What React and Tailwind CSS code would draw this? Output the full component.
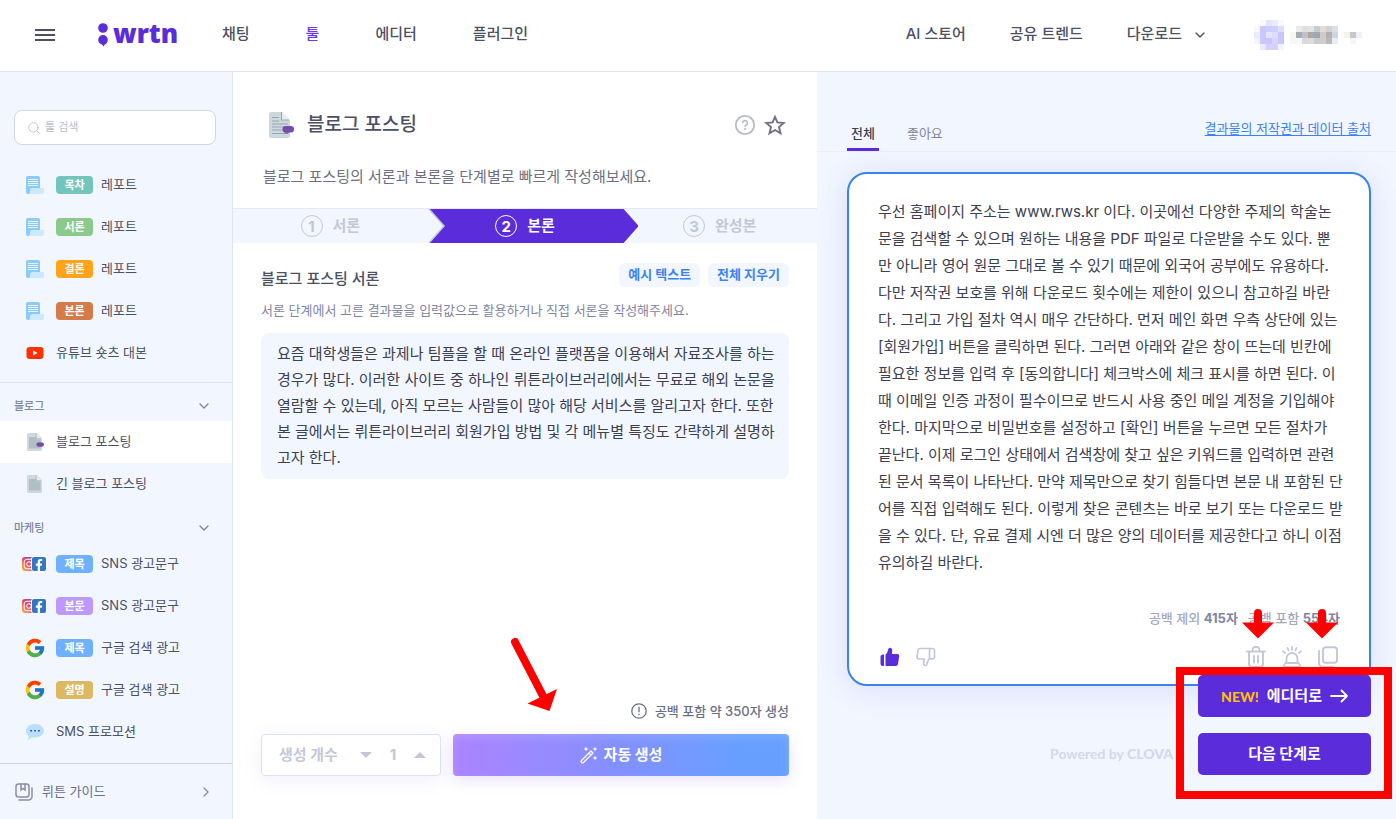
import React from "react";
import { Search, ChevronDown, ChevronRight } from "lucide-react";
import { FcGoogle } from "react-icons/fc";
import { FaInstagram, FaFacebookF } from "react-icons/fa";

const INTRO = `요즘 대학생들은 과제나 팀플을 할 때 온라인 플랫폼을 이용해서 자료조사를 하는 경우가 많다. 이러한 사이트 중 하나인 뤼튼라이브러리에서는 무료로 해외 논문을 열람할 수 있는데, 아직 모르는 사람들이 많아 해당 서비스를 알리고자 한다. 또한 본 글에서는 뤼튼라이브러리 회원가입 방법 및 각 메뉴별 특징도 간략하게 설명하고자 한다.`;

const RESULT = `우선 홈페이지 주소는 www.rws.kr 이다. 이곳에선 다양한 주제의 학술논
문을 검색할 수 있으며 원하는 내용을 PDF 파일로 다운받을 수도 있다. 뿐
만 아니라 영어 원문 그대로 볼 수 있기 때문에 외국어 공부에도 유용하다.
다만 저작권 보호를 위해 다운로드 횟수에는 제한이 있으니 참고하길 바란
다. 그리고 가입 절차 역시 매우 간단하다. 먼저 메인 화면 우측 상단에 있는
[회원가입] 버튼을 클릭하면 된다. 그러면 아래와 같은 창이 뜨는데 빈칸에
필요한 정보를 입력 후 [동의합니다] 체크박스에 체크 표시를 하면 된다. 이
때 이메일 인증 과정이 필수이므로 반드시 사용 중인 메일 계정을 기입해야
한다. 마지막으로 비밀번호를 설정하고 [확인] 버튼을 누르면 모든 절차가
끝난다. 이제 로그인 상태에서 검색창에 찾고 싶은 키워드를 입력하면 관련
된 문서 목록이 나타난다. 만약 제목만으로 찾기 힘들다면 본문 내 포함된 단
어를 직접 입력해도 된다. 이렇게 찾은 콘텐츠는 바로 보기 또는 다운로드 받
을 수 있다. 단, 유료 결제 시엔 더 많은 양의 데이터를 제공한다고 하니 이점
유의하길 바란다.`;

const AVATAR = [
  [1, 0, "#f8f8ff"], [2, 0, "#e4e4fe"], [3, 0, "#ebebff"], [4, 0, "#f8f8ff"],
  [0, 1, "#f8f8ff"], [1, 1, "#c8c8fe"], [2, 1, "#cfcfff"], [3, 1, "#cfcfff"], [4, 1, "#dedeff"],
  [0, 2, "#eaeafe"], [1, 2, "#c6c8ff"], [2, 2, "#e4e4fe"], [3, 2, "#dcdcff"], [4, 2, "#c6c6ff"],
  [0, 3, "#f4f4ff"], [1, 3, "#c8c8ff"], [2, 3, "#c6c6ff"], [3, 3, "#d4d4ff"], [4, 3, "#c8c8ff"],
  [1, 4, "#eaeaff"], [2, 4, "#d2d2ff"], [3, 4, "#d2d2ff"], [4, 4, "#f4f4ff"],
  [7, 1, "#eaeaea"], [8, 1, "#e0e0e4"], [9, 1, "#e6e2e0"], [10, 1, "#c6ccd6"], [11, 1, "#e2dcda"], [12, 1, "#d2d2d2"], [13, 1, "#d8e0e8"],
  [6, 2, "#f8f6f2"], [7, 2, "#a8acb8"], [8, 2, "#c0c0c8"], [9, 2, "#b0a8a0"], [10, 2, "#9ea8b4"], [11, 2, "#d0caca"], [12, 2, "#b4b0b0"], [13, 2, "#ccd6e2"],
  [15, 2, "#f6f2f0"], [16, 2, "#c6c8cc"], [17, 2, "#eef2f8"],
  [6, 3, "#f6f6f6"], [7, 3, "#f6f6f4"], [8, 3, "#dadadc"], [9, 3, "#dedcda"], [10, 3, "#caccd0"], [11, 3, "#d0cccc"], [12, 3, "#b8b8b8"], [13, 3, "#e8eef4"],
  [16, 3, "#f6f6f6"],
];

function Avatar() {
  return (
    <svg width="108" height="30" viewBox="0 0 18 5" shapeRendering="crispEdges" aria-hidden="true">
      {AVATAR.map(([x, y, c]) => <rect key={`${x}-${y}`} x={x} y={y} width="1" height="1" fill={c} />)}
    </svg>
  );
}

function ReportIcon() {
  return (
    <svg width="18" height="18" viewBox="0 0 18 18" aria-hidden="true">
      <path d="M2 0h10a2 2 0 0 1 2 2v11L5 18H2a2 2 0 0 1-2-2V2a2 2 0 0 1 2-2z" fill="#8bcbfb" />
      <path d="M2 3.500h10M2 5.500h10M2 7.500h10M2 9.500h10" stroke="#fff" strokeWidth="0.8" />
      <path d="M6.500 12H18v3.500A2.500 2.500 0 0 1 15.500 18H2.500C4 17.500 4 16.500 4 14.500A2.500 2.500 0 0 1 6.500 12z" fill="#cde9ff" />
    </svg>
  );
}

function YoutubeIcon() {
  return (
    <svg width="18" height="18" viewBox="0 0 18 18" aria-hidden="true">
      <rect x="0.500" y="3" width="17" height="12" rx="3.200" fill="#ff3000" />
      <path d="M7.200 6.500v5l4.300-2.500z" fill="#fff" />
    </svg>
  );
}

function DocIcon({ edit }) {
  return (
    <svg width="18" height="18" viewBox="0 0 18 18" aria-hidden="true">
      <path d="M2.500 0H11l5 5v11.500a1.500 1.500 0 0 1-1.500 1.500h-12A1.500 1.500 0 0 1 1 16.500v-15A1.500 1.500 0 0 1 2.500 0z" fill="#cfd8dc" />
      <path d="M3 4H10V6.500H14.500V15.500H3z" fill="#b0bec5" />
      <path d="M10.500 0v5.500H16z" fill="#e4ebee" />
      <path d="M10.200 0v5.700H15" fill="none" stroke="#a3b3bb" strokeWidth="0.7" />
      {edit && <ellipse cx="14.200" cy="11.500" rx="3.800" ry="2.300" fill="#744cae" />}
    </svg>
  );
}

function TitleDocIcon() {
  return (
    <svg width="28" height="28" viewBox="0 0 28 28" aria-hidden="true">
      <path d="M4 1h11l8 8v16a2 2 0 0 1-2 2H4a2 2 0 0 1-2-2V3a2 2 0 0 1 2-2z" fill="#cdd7dc" />
      <path d="M15 1v8h8z" fill="#e9eef0" />
      <path d="M14.500 1v8H22M5 6.500h7M5 10h7M5 13h16M5 16h16M5 19h16M5 22.500h13" fill="none" stroke="#9aaab3" strokeWidth="1.100" />
      <path d="M17 20.500h5.500l-1.500 2.500h-3z" fill="#7c8696" />
      <rect x="15.500" y="15" width="11.500" height="6.500" rx="3" fill="#744cae" />
    </svg>
  );
}

function SnsIcon() {
  return (
    <span className="-ml-[6px] -mr-1 flex shrink-0 items-center">
      <span className="flex size-[14px] items-center justify-center rounded-[3px] bg-linear-to-tr from-[#fdb145] via-[#ee3a63] to-[#4a35d8] text-white"><FaInstagram size={12} /></span>
      <span className="-ml-[5px] flex size-4 items-end justify-center rounded-[3px] border border-white bg-[#3277c5] text-white"><FaFacebookF size={12} /></span>
    </span>
  );
}

function SmsIcon() {
  return (
    <svg width="18" height="18" viewBox="0 0 18 18" aria-hidden="true">
      <path d="M9 1c5 0 9 2.900 9 6.800s-4 6.800-9 6.800c-1 0-1.900-.1-2.800-.3L1.500 17.300 3 13C1.200 11.700 0 9.900 0 7.800 0 3.900 4 1 9 1z" fill="#bbdefb" />
      <path d="M4.200 7h1.800v1.600H4.200zM8.100 7h1.800v1.600H8.100zM12 7h1.800v1.600H12z" fill="#1f5f96" />
    </svg>
  );
}

function Item({ icon, tag, tagClass, label, active }) {
  return (
    <li>
      <a href="#" className={`flex h-[42px] items-center pl-[26px] text-[13px] text-[#4b5063] ${active ? "bg-white" : ""}`}>
        <span className="flex w-[18px] shrink-0 justify-center">{icon}</span>
        {tag && <span className={`ml-3 flex h-[18px] w-[37px] items-center justify-center rounded-[4px] text-[11px] font-bold text-white ${tagClass}`}>{tag}</span>}
        <span className={tag ? "ml-2" : "ml-3"}>{label}</span>
      </a>
    </li>
  );
}

function SectionButton({ children }) {
  return (
    <button type="button" className="flex h-[38px] w-full items-center justify-between pt-2 pl-[14px] pr-5 text-[11px] font-medium text-[#81869f]">
      {children}
      <ChevronDown size={16} strokeWidth={2} />
    </button>
  );
}

function Step({ n, label, active }) {
  return (
    <li className={`relative flex flex-1 items-center justify-center gap-[10px] text-[15px] font-bold ${active ? "z-10 text-white" : "text-[#c3c8d9]"}`}>
      {active && (
        <svg className="absolute inset-y-0 left-0 h-full w-[calc(100%+16px)]" viewBox="0 0 210 34" preserveAspectRatio="none" aria-hidden="true">
          <path d="M1 0H195L210 17L195 34H1L16 17z" fill="#5b2cd9" />
          <path d="M1 0L16 17L1 34" fill="none" stroke="#bcc5d8" strokeWidth="1.500" />
        </svg>
      )}
      <span className="relative flex size-[22px] items-center justify-center rounded-full border border-current leading-none">{n}</span>
      <span className="relative">{label}</span>
    </li>
  );
}

function ShortArrow() {
  return (
    <svg width="32" height="30" viewBox="0 0 32 30" aria-hidden="true">
      <path d="M16 4v12" stroke="#ff0000" strokeWidth="8" strokeLinecap="round" />
      <path d="M0 13.500h32L16 29.500z" fill="#ff0000" />
    </svg>
  );
}

function Header() {
  return (
    <header className="flex h-[72px] shrink-0 items-center border-b border-[#dfe4f2] bg-white pl-[35px] pr-[34px] pb-0.5 text-[15px] font-medium text-[#4b5063]">
      <button type="button" aria-label="메뉴">
        <svg width="20" height="14" viewBox="0 0 20 14" stroke="currentColor" strokeWidth="2" aria-hidden="true"><path d="M0 2h20M0 7h20M0 12h20" /></svg>
      </button>
      <a href="#" aria-label="wrtn" className="ml-[43px] flex w-[81px] items-center gap-[5px] text-[#5b2cd9]">
        <svg width="10" height="24" viewBox="0 0 10 24" className="shrink-0" aria-hidden="true">
          <circle cx="5" cy="5" r="4.800" fill="currentColor" />
          <path d="M5 12a4.800 4.800 0 0 1 4.800 4.800c0 3-2 4.200-3 4.800L5.500 23.500 4 21.500C1.500 21 .2 19 .2 16.800A4.800 4.800 0 0 1 5 12z" fill="currentColor" />
        </svg>
        <span className="-mt-1 font-['Open_Sans'] text-[26px] leading-8 font-extrabold">wrtn</span>
      </a>
      <nav className="ml-[43px] flex gap-14">
        <a href="#">채팅</a>
        <a href="#" className="text-[#6a3af0]">툴</a>
        <a href="#">에디터</a>
        <a href="#">플러그인</a>
      </nav>
      <nav className="ml-auto flex items-center gap-11">
        <a href="#">AI 스토어</a>
        <a href="#">공유 트렌드</a>
        <button type="button" className="flex items-center gap-[10px]">다운로드 <ChevronDown size={16} /></button>
      </nav>
      <button type="button" aria-label="프로필" className="ml-[46px]"><Avatar /></button>
    </header>
  );
}

function Sidebar() {
  return (
    <aside className="flex flex-col border-r border-[#dfe4f5] bg-[#f1f6ff]">
      <label className="mt-[38px] mr-4 mb-[19px] ml-[14px] flex h-[35px] items-center gap-1 rounded-lg border border-[#cfd5ee] bg-white px-3">
        <Search size={14} strokeWidth={1.5} className="shrink-0 text-[#b9bed0]" />
        <input type="text" aria-label="툴 검색" placeholder="툴 검색" className="w-full min-w-0 text-[11px] outline-none placeholder:text-[#b9bed0]" />
      </label>
      <ul className="pb-2">
        <Item icon={<ReportIcon />} tag="목차" tagClass="bg-[#72c5bd]" label="레포트" />
        <Item icon={<ReportIcon />} tag="서론" tagClass="bg-[#8bca8b]" label="레포트" />
        <Item icon={<ReportIcon />} tag="결론" tagClass="bg-[#ffa31a]" label="레포트" />
        <Item icon={<ReportIcon />} tag="본론" tagClass="bg-[#d57a49]" label="레포트" />
        <Item icon={<YoutubeIcon />} label="유튜브 숏츠 대본" />
      </ul>
      <div className="border-t border-[#dfe4f5]">
        <SectionButton>블로그</SectionButton>
        <ul>
          <Item icon={<DocIcon edit />} label="블로그 포스팅" active />
          <Item icon={<DocIcon />} label="긴 블로그 포스팅" />
        </ul>
        <SectionButton>마케팅</SectionButton>
        <ul>
          <Item icon={<SnsIcon />} tag="제목" tagClass="bg-[#6fb1ff]" label="SNS 광고문구" />
          <Item icon={<SnsIcon />} tag="본문" tagClass="bg-[#bd98ff]" label="SNS 광고문구" />
          <Item icon={<FcGoogle size={22} className="shrink-0" />} tag="제목" tagClass="bg-[#6fb1ff]" label="구글 검색 광고" />
          <Item icon={<FcGoogle size={22} className="shrink-0" />} tag="설명" tagClass="bg-[#dcb862]" label="구글 검색 광고" />
          <Item icon={<SmsIcon />} label="SMS 프로모션" />
        </ul>
      </div>
      <a href="#" className="mt-auto flex h-14 items-center gap-2 border-t border-[#cfd5ea] px-[14px] text-[13px] text-[#6b7088]">
        <svg width="20" height="20" viewBox="0 0 20 20" fill="none" stroke="#8a8fa8" strokeWidth="1.500" aria-hidden="true">
          <rect x="2" y="2" width="13" height="13" rx="2.500" />
          <path d="M7 2v6l2-1.500L11 8V2M18 6v8.500a3.500 3.500 0 0 1-3.500 3.500H5" strokeLinecap="round" />
        </svg>
        <span className="flex-1">뤼튼 가이드</span>
        <ChevronRight size={16} className="mr-1 text-[#8a8fa8]" />
      </a>
    </aside>
  );
}

function Editor() {
  return (
    <main className="relative flex flex-col bg-white">
      <div className="flex items-center gap-3 pt-[39px] pl-[34px] pr-[31px]">
        <TitleDocIcon />
        <h1 className="flex-1 text-[19px] leading-7 font-medium text-[#4b5063]">블로그 포스팅</h1>
        <div className="flex items-center gap-2">
          <button type="button" aria-label="도움말">
            <svg width="22" height="22" viewBox="0 0 22 22" fill="none" stroke="#b8bac7" aria-hidden="true">
              <circle cx="11" cy="11" r="9.200" strokeWidth="1.800" />
              <path d="M8.600 9a2.400 2.400 0 1 1 3.700 2c-.9.500-1.300 1-1.300 1.800" strokeWidth="1.700" />
              <path d="M11 14v1.800" strokeWidth="1.800" />
            </svg>
          </button>
          <button type="button" aria-label="즐겨찾기">
            <svg width="22" height="22" viewBox="0 0 22 22" fill="none" stroke="#6d7086" strokeWidth="1.900" aria-hidden="true">
              <path d="M11 2.800L13.400 8.400L19.800 9L15 13.100L16.500 19.200L11 16L5.500 19.200L7 13.100L2.200 9L8.600 8.400z" />
            </svg>
          </button>
        </div>
      </div>
      <p className="mt-[26px] mb-[19px] px-[30px] text-[15px] leading-6 text-[#6b6f80]">블로그 포스팅의 서론과 본론을 단계별로 빠르게 작성해보세요.</p>
      <ol className="flex h-[35px] border-t border-[#e3e9f7] bg-[#f1f6ff]">
        <Step n="1" label="서론" />
        <Step n="2" label="본론" active />
        <Step n="3" label="완성본" />
      </ol>
      <div className="flex flex-1 flex-col px-7 pt-5 pb-[43px]">
        <div className="flex items-start justify-between">
          <label htmlFor="intro" className="pt-1 text-[15px] leading-6 font-medium text-[#4b5063]">블로그 포스팅 서론</label>
          <div className="flex gap-2 text-[13px] font-bold text-[#3b82f6]">
            <button type="button" className="h-6 rounded-md bg-[#f1f6ff] px-[9px]">예시 텍스트</button>
            <button type="button" className="h-6 rounded-md bg-[#f1f6ff] px-[9px]">전체 지우기</button>
          </div>
        </div>
        <p className="mt-[7px] text-[13px] leading-6 text-[#81869f]">서론 단계에서 고른 결과물을 입력값으로 활용하거나 직접 서론을 작성해주세요.</p>
        <textarea id="intro" rows={5} defaultValue={INTRO} className="mt-[11px] block w-full resize-none overflow-hidden rounded-lg bg-[#f1f6ff] py-2 pl-4 pr-2 text-[15px] leading-[26px] text-[#3c4050] outline-none" />
        <div className="mt-auto flex items-center justify-end gap-2 text-[13px] leading-6 font-medium text-[#6b6f86]">
          <svg width="16" height="16" viewBox="0 0 16 16" fill="none" stroke="currentColor" strokeWidth="1.300" aria-hidden="true">
            <circle cx="8" cy="8" r="7.200" />
            <path d="M8 3.800v5.400M8 10.800v1.500" />
          </svg>
          공백 포함 약 350자 생성
        </div>
        <div className="mt-[11px] flex gap-3">
          <div className="flex h-[42px] w-[180px] items-center rounded-[4px] border border-[#dbe1fa] bg-white pl-[17px] pr-[10px] text-[15px] font-bold text-[#c3c8d9] shadow-[0_4px_20px_rgba(91,44,217,0.08)]">
            <span className="flex-1">생성 개수</span>
            <button type="button" aria-label="줄이기" className="px-1"><svg width="12" height="6" viewBox="0 0 12 6" aria-hidden="true"><path d="M0 0h12L6 6z" fill="#c3c8d9" /></svg></button>
            <output className="w-[34px] text-center">1</output>
            <button type="button" aria-label="늘리기" className="px-1"><svg width="12" height="6" viewBox="0 0 12 6" aria-hidden="true"><path d="M0 6h12L6 0z" fill="#c3c8d9" /></svg></button>
          </div>
          <button type="button" className="flex h-[42px] flex-1 items-center justify-center gap-[6px] rounded-[4px] bg-linear-to-r from-[#ab83ff] via-[#8290ff] via-50% to-[#669fff] to-85% text-[15px] font-bold text-white shadow-[0_4px_16px_rgba(91,44,217,0.14),inset_0_4px_10px_rgba(255,255,255,0.15)]">
            <svg width="18" height="18" viewBox="0 0 18 18" fill="none" stroke="#fff" strokeWidth="1.300" aria-hidden="true">
              <path d="M1.500 14.500L11 5l2 2-9.500 9.500a1.400 1.400 0 0 1-2-2zM9 7l2 2" strokeLinejoin="round" />
              <path d="M6 .5l.7 1.800 1.800.7-1.800.7L6 5.500l-.7-1.800L3.500 3l1.800-.7zM15 .5l.7 1.800 1.800.7-1.800.7-.7 1.800-.7-1.800L12.500 3l1.800-.7zM15 9.500l.7 1.800 1.800.7-1.800.7-.7 1.800-.7-1.800-1.800-.7 1.800-.7z" fill="#fff" stroke="none" />
            </svg>
            자동 생성
          </button>
        </div>
      </div>
      <svg className="absolute bottom-[107px] left-[276px]" width="50" height="76" viewBox="0 0 50 76" aria-hidden="true">
        <path d="M6 6L34 60" stroke="#ff0000" strokeWidth="8" strokeLinecap="round" />
        <path d="M18.500 67.500L48 53L40.500 75z" fill="#ff0000" />
      </svg>
    </main>
  );
}

function Results() {
  return (
    <section className="relative flex flex-col bg-[#f1f6ff] pt-12">
      <div className="flex justify-between border-b border-[#e8eefb] pl-[30px] pr-[25px]">
        <div role="tablist" className="flex gap-6 text-[13px]">
          <button type="button" role="tab" aria-selected="true" className="h-[31px] border-b-[3px] border-[#5b2cd9] px-1 font-medium text-[#3c4050]">전체</button>
          <button type="button" role="tab" aria-selected="false" className="h-[31px] border-b-[3px] border-transparent px-1 text-[#81869f]">좋아요</button>
        </div>
        <a href="#" className="-mt-1 text-[13px] leading-6 text-[#3b82f6] underline underline-offset-2">결과물의 저작권과 데이터 출처</a>
      </div>
      <article className="ml-[30px] mr-[25px] mt-5 rounded-[20px] border-2 border-[#3883ee] bg-white px-[29px] pt-6 pb-4 shadow-[0_4px_30px_rgba(91,80,217,0.14)]">
        <p className="-mr-4 text-[15px] leading-[27px] whitespace-pre-line text-[#3c4050]">{RESULT}</p>
        <div className="relative mt-[30px]">
          <div className="flex justify-end gap-[10px] text-[13px] leading-6 font-medium text-[#a3a8bd]">
            <span>공백 제외 <b className="text-[#81869f]">415자</b></span>
            <span>공백 포함 <b className="text-[#81869f]">554자</b></span>
          </div>
          <div className="mt-4 flex items-center pr-px text-[#c3c8d9]">
            <button type="button" aria-label="좋아요" className="ml-px text-[#5b2cd9]">
              <svg width="22" height="22" viewBox="0 0 22 22" fill="currentColor" aria-hidden="true">
                <path d="M4 8.500h1V20H4a2.500 2.500 0 0 1-2.500-2.500V11A2.500 2.500 0 0 1 4 8.500zM6.500 8.500C8 8 8.500 5.500 9 4c.4-1.500 1.200-2.300 2.300-2.200C13 2 13.300 3.500 13.200 5l-.4 3h5.400a2 2 0 0 1 2 2.300l-1.200 7.800a2.200 2.200 0 0 1-2.200 1.900H6.500z" />
              </svg>
            </button>
            <button type="button" aria-label="싫어요" className="ml-[14px]">
              <svg width="22" height="22" viewBox="0 0 22 22" fill="none" stroke="currentColor" strokeWidth="1.700" strokeLinejoin="round" aria-hidden="true">
                <path d="M14.500 2.500H5A2 2 0 0 0 3 4.200L2 11a1.800 1.800 0 0 0 1.800 2h5.400l-.6 4c-.1 1.600.7 2.500 1.700 2.500s1.500-.7 1.800-1.800c.5-2 1-4.200 2.400-4.900zM14.500 2.500h3A2 2 0 0 1 19.500 4.500v6.300a2 2 0 0 1-2 2h-3z" />
              </svg>
            </button>
            <div className="ml-auto flex gap-[14px]">
              <button type="button" aria-label="삭제">
                <svg width="22" height="22" viewBox="0 0 22 22" fill="none" stroke="currentColor" strokeWidth="1.900" strokeLinecap="round" aria-hidden="true">
                  <path d="M2 5.500h18M4 5.500V18a3 3 0 0 0 3 3h8a3 3 0 0 0 3-3V5.500M7.500 5c0-2.500.8-4 2.500-4h2c1.700 0 2.500 1.500 2.500 4M9 10v6.500M13 10v6.500" />
                </svg>
              </button>
              <button type="button" aria-label="신고">
                <svg width="22" height="22" viewBox="0 0 22 22" fill="none" stroke="currentColor" strokeWidth="1.800" strokeLinecap="round" strokeLinejoin="round" aria-hidden="true">
                  <path d="M5.500 17v-4.500a5.500 5.500 0 0 1 11 0V17M4.500 17h13l1.500 2.500V21H3v-1.500zM11 1v3M6.500 2l1 2.500M15.500 2l-1 2.500M2 5.500l2 1.500M20 5.500L18 7" />
                </svg>
              </button>
              <button type="button" aria-label="복사">
                <svg width="22" height="22" viewBox="0 0 22 22" fill="none" stroke="currentColor" strokeWidth="1.900" strokeLinecap="round" aria-hidden="true">
                  <rect x="6" y="1.200" width="14" height="15.500" rx="2.800" />
                  <path d="M2 5v12a4 4 0 0 0 4 4h10" />
                </svg>
              </button>
            </div>
          </div>
          <div className="absolute top-[3px] right-[2px] flex gap-8">
            <ShortArrow />
            <ShortArrow />
          </div>
        </div>
      </article>
      <p className="mt-14 pr-[223px] text-right font-['Lato'] text-[14px] leading-6 font-bold text-[#d3d8ef]">Powered by <b className="font-black">CLOVA</b></p>
      <div className="absolute right-1 bottom-5 flex w-[216px] flex-col gap-4 border-8 border-[#ff0000] pr-[13px] pb-4 pl-[14px] text-[15px] font-bold text-white">
        <button type="button" className="flex h-[42px] items-center justify-center gap-2 rounded-[5px] bg-[#5b2cd9]">
          <span className="font-['Lato'] text-[14px] font-black text-[#ffbe0a]">NEW!</span>
          에디터로
          <svg width="18" height="14" viewBox="0 0 18 14" fill="none" stroke="#fff" strokeWidth="1.800" strokeLinecap="round" strokeLinejoin="round" aria-hidden="true"><path d="M1 7h16M11.500 1.500L17 7l-5.500 5.500" /></svg>
        </button>
        <button type="button" className="h-[42px] rounded-[5px] bg-[#5b2cd9]">다음 단계로</button>
      </div>
    </section>
  );
}

export default function App() {
  return (
    <div className="flex min-h-screen flex-col font-['Inter','Noto_Sans_CJK_KR',sans-serif]">
      <Header />
      <div className="grid flex-1 grid-cols-[233px_minmax(0,584fr)_minmax(0,579fr)]">
        <Sidebar />
        <Editor />
        <Results />
      </div>
    </div>
  );
}
